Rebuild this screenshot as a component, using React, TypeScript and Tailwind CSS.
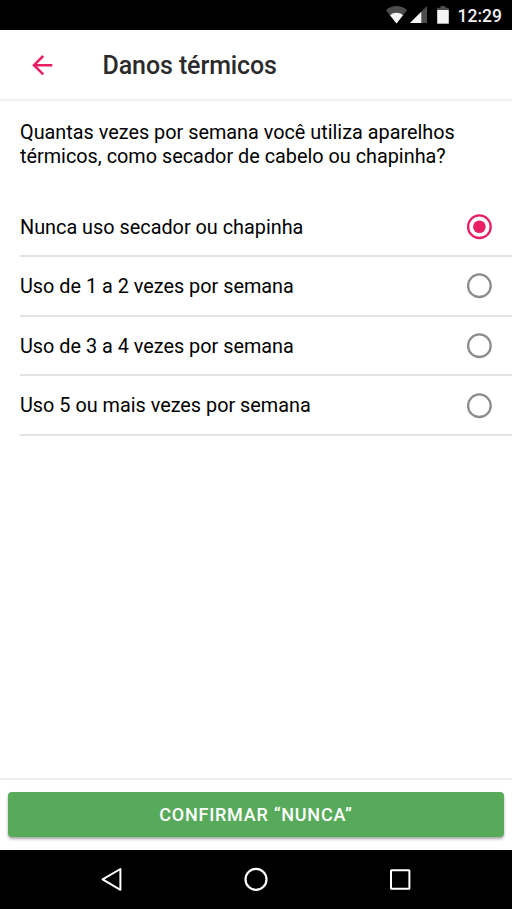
import { useState } from 'react'

const options = [
  { id: 'never', label: 'Nunca uso secador ou chapinha', short: 'Nunca' },
  { id: 'low', label: 'Uso de 1 a 2 vezes por semana', short: '1 a 2' },
  { id: 'mid', label: 'Uso de 3 a 4 vezes por semana', short: '3 a 4' },
  { id: 'high', label: 'Uso 5 ou mais vezes por semana', short: '5 ou mais' },
]

function StatusBar() {
  return (
    <div className="flex h-[30px] shrink-0 items-center justify-end bg-black pr-2.5 text-white">
      <svg className="h-[30px] w-[64px]" viewBox="386 0 64 30">
        <path d="M386 10.3C392 4.7 401 4.7 407 10.3L396.5 23.5Z" fill="#4d4d4d" />
        <path d="M390 15.2C394 12 399 12 403 15.2L396.5 23.5Z" fill="#f5f5f5" />
        <path d="M427 6V23H410Z" fill="#4d4d4d" />
        <path d="M421.3 11.7V23H410Z" fill="#f5f5f5" />
        <path d="M440.5 6h5v1.8h3.3v3h-11.6v-3h3.3z" fill="#4d4d4d" />
        <path d="M437.2 10h11.6v13.7h-11.6z" fill="#f5f5f5" />
      </svg>
      <span className="ml-2 pt-[3px] text-[17.5px] leading-none font-medium text-[#f0f0f0]">12:29</span>
    </div>
  )
}

function Header() {
  return (
    <header className="flex h-[71px] shrink-0 items-center border-b-2 border-[#f0f0f0] pl-[30px]">
      <svg className="size-6" viewBox="0 0 24 24" fill="none" stroke="#e91e63" strokeWidth="2.5">
        <path d="M22.3 12.2H4M13.2 3L4 12.2l9.2 9.2" />
      </svg>
      <h1 className="ml-[48.5px] pt-0.5 text-[25px] leading-none font-medium tracking-[-0.1px] text-[#2b2b2b]">
        Danos térmicos
      </h1>
    </header>
  )
}

function Radio({ checked }: { checked: boolean }) {
  return (
    <svg className="size-[26px]" viewBox="0 0 26 26" fill="none">
      <circle cx="13.4" cy="12.7" r="11.3" stroke={checked ? '#e91e63' : '#8c8c8c'} strokeWidth="2.3" />
      {checked && <circle cx="13.4" cy="12.7" r="6.3" fill="#e91e63" />}
    </svg>
  )
}

function NavBar() {
  return (
    <nav className="flex h-[59px] shrink-0 items-center justify-center gap-[116px] bg-black">
      <svg className="size-7" viewBox="0 0 28 28" fill="none" stroke="#fff" strokeWidth="2" strokeLinejoin="round">
        <path d="M22.4 3v20.8L4.6 13.4z" />
      </svg>
      <svg className="size-7" viewBox="0 0 28 28" fill="none" stroke="#fff" strokeWidth="2.2">
        <circle cx="14" cy="13.4" r="10.5" />
      </svg>
      <svg className="size-7" viewBox="0 0 28 28" fill="none" stroke="#fff" strokeWidth="2">
        <rect x="5" y="4.2" width="18.4" height="18.6" rx="0.5" />
      </svg>
    </nav>
  )
}

export default function App() {
  const [selected, setSelected] = useState('never')
  const current = options.find((o) => o.id === selected)

  return (
    <div className="flex h-[909px] w-[512px] flex-col overflow-hidden bg-white font-[Roboto,sans-serif] text-black">
      <StatusBar />
      <Header />

      <main className="flex-1 pl-5">
        <p className="pt-5 text-[19.84px] leading-6">
          Quantas vezes por semana você utiliza aparelhos
          <br />
          térmicos, como secador de cabelo ou chapinha?
        </p>
        <div className="mt-[28.6px]" role="radiogroup">
          {options.map((o) => (
            <button
              key={o.id}
              role="radio"
              aria-checked={o.id === selected}
              onClick={() => setSelected(o.id)}
              className="flex h-[59.6px] w-full items-center justify-between border-b-2 border-[#e4e4e4] pt-px pr-5 text-left text-[19.84px]"
            >
              <span className="pt-[1.4px]">{o.label}</span>
              <Radio checked={o.id === selected} />
            </button>
          ))}
        </div>
      </main>

      <footer className="h-[72px] shrink-0 border-t-2 border-[#ededed] px-2 pt-3">
        <button className="h-[45px] w-full rounded bg-[#58aa5b] text-[18px] font-medium tracking-[0.75px] text-white uppercase shadow-[0_2px_3px_rgba(0,0,0,0.35)]">
          Confirmar “{current?.short}”
        </button>
      </footer>
      <NavBar />
    </div>
  )
}
